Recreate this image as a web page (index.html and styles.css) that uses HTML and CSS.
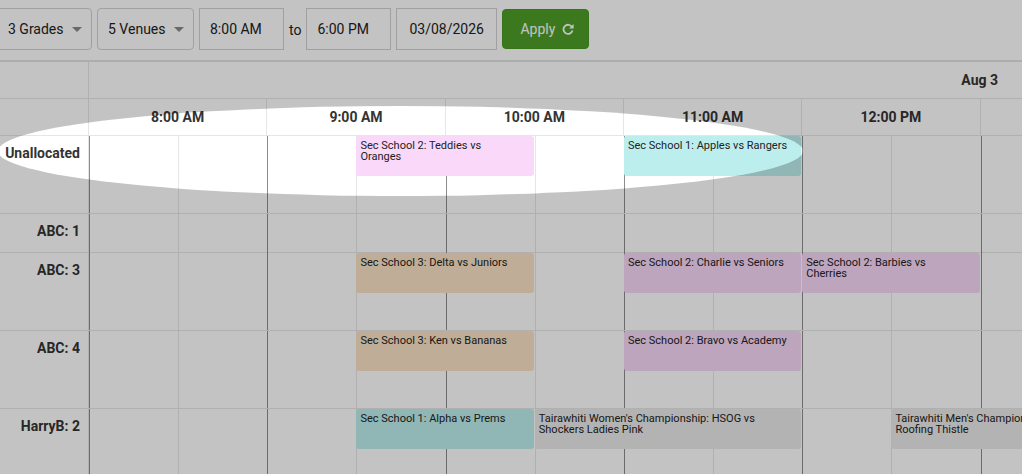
FILE: index.html
```html
<!DOCTYPE html>
<html lang="en">
<head>
<meta charset="utf-8">
<title>Fixture Scheduler</title>
<link rel="stylesheet" href="styles.css">
</head>
<body>
  <div class="toolbar">
    <button class="dropdown">3 Grades <span class="caret"></span></button>
    <button class="dropdown">5 Venues <span class="caret"></span></button>
    <input class="field field-time" value="8:00 AM" readonly>
    <span class="to">to</span>
    <input class="field field-time" value="6:00 PM" readonly>
    <input class="field field-date" value="03/08/2026" readonly>
    <button class="apply">Apply
      <svg class="refresh" width="12" height="12" viewBox="0 0 12 12" aria-hidden="true">
        <path d="M10.1 4.1 A4.6 4.6 0 1 0 10.5 7.6" fill="none" stroke="#fff" stroke-width="1.8"/>
        <path d="M11.6 1 V5.5 H7.1 Z" fill="#fff"/>
      </svg>
    </button>
  </div>

  <div class="calendar">
    <div class="head-row">
      <div class="corner"></div>
      <div class="day">Aug 3</div>
    </div>
    <div class="head-row">
      <div class="corner"></div>
      <div class="times">
        <div class="time">8:00 AM</div>
        <div class="time">9:00 AM</div>
        <div class="time">10:00 AM</div>
        <div class="time">11:00 AM</div>
        <div class="time">12:00 PM</div>
        <div class="time"></div>
      </div>
    </div>

    <div class="res-row">
      <div class="res-label">Unallocated</div>
      <div class="lane">
        <div class="slots">
          <i class="slot hour"></i><i class="slot"></i><i class="slot hour"></i><i class="slot"></i>
          <i class="slot hour"></i><i class="slot"></i><i class="slot hour"></i><i class="slot"></i>
          <i class="slot hour"></i><i class="slot"></i><i class="slot hour"></i><i class="slot"></i>
        </div>
        <div class="events">
          <div class="event school2" style="grid-column: 4 / span 2">Sec School 2: Teddies vs Oranges</div>
          <div class="event school1" style="grid-column: 7 / span 2">Sec School 1: Apples vs Rangers</div>
        </div>
      </div>
    </div>

    <div class="res-row short">
      <div class="res-label">ABC: 1</div>
      <div class="lane">
        <div class="slots">
          <i class="slot hour"></i><i class="slot"></i><i class="slot hour"></i><i class="slot"></i>
          <i class="slot hour"></i><i class="slot"></i><i class="slot hour"></i><i class="slot"></i>
          <i class="slot hour"></i><i class="slot"></i><i class="slot hour"></i><i class="slot"></i>
        </div>
        <div class="events"></div>
      </div>
    </div>

    <div class="res-row">
      <div class="res-label">ABC: 3</div>
      <div class="lane">
        <div class="slots">
          <i class="slot hour"></i><i class="slot"></i><i class="slot hour"></i><i class="slot"></i>
          <i class="slot hour"></i><i class="slot"></i><i class="slot hour"></i><i class="slot"></i>
          <i class="slot hour"></i><i class="slot"></i><i class="slot hour"></i><i class="slot"></i>
        </div>
        <div class="events">
          <div class="event school3" style="grid-column: 4 / span 2">Sec School 3: Delta vs Juniors</div>
          <div class="event school2" style="grid-column: 7 / span 2">Sec School 2: Charlie vs Seniors</div>
          <div class="event school2" style="grid-column: 9 / span 2">Sec School 2: Barbies vs Cherries</div>
        </div>
      </div>
    </div>

    <div class="res-row">
      <div class="res-label">ABC: 4</div>
      <div class="lane">
        <div class="slots">
          <i class="slot hour"></i><i class="slot"></i><i class="slot hour"></i><i class="slot"></i>
          <i class="slot hour"></i><i class="slot"></i><i class="slot hour"></i><i class="slot"></i>
          <i class="slot hour"></i><i class="slot"></i><i class="slot hour"></i><i class="slot"></i>
        </div>
        <div class="events">
          <div class="event school3" style="grid-column: 4 / span 2">Sec School 3: Ken vs Bananas</div>
          <div class="event school2" style="grid-column: 7 / span 2">Sec School 2: Bravo vs Academy</div>
        </div>
      </div>
    </div>

    <div class="res-row">
      <div class="res-label">HarryB: 2</div>
      <div class="lane">
        <div class="slots">
          <i class="slot hour"></i><i class="slot"></i><i class="slot hour"></i><i class="slot"></i>
          <i class="slot hour"></i><i class="slot"></i><i class="slot hour"></i><i class="slot"></i>
          <i class="slot hour"></i><i class="slot"></i><i class="slot hour"></i><i class="slot"></i>
        </div>
        <div class="events">
          <div class="event school1" style="grid-column: 4 / span 2">Sec School 1: Alpha vs Prems</div>
          <div class="event champ" style="grid-column: 6 / span 3">Tairawhiti Women's Championship: HSOG vs Shockers Ladies Pink</div>
          <div class="event champ" style="grid-column: 10 / span 3">Tairawhiti Men's Championship: YMP Seniors vs Roofing Thistle</div>
        </div>
      </div>
    </div>
  </div>

  <div class="spotlight"></div>
</body>
</html>
```

FILE: styles.css
```css
html, body {
  margin: 0;
  padding: 0;
  background: #fff;
  overflow: hidden;
}

body {
  font-family: "Roboto", "Noto Sans", sans-serif;
  color: #333;
  width: 1022px;
  height: 474px;
}

/* ---------- filter toolbar ---------- */
.toolbar {
  display: flex;
  align-items: flex-start;
  gap: 5px;
  height: 62px;
  box-sizing: border-box;
  padding-top: 8px;
  margin-left: -3px;
  border-bottom: 2px solid #e2e2e2;
}

.dropdown {
  display: flex;
  align-items: center;
  gap: 8px;
  height: 42px;
  margin: 0;
  padding: 0 9.5px 0 10px;
  border: 1px solid #d2d2d2;
  border-radius: 4px;
  background: #fff;
  font-family: inherit;
  font-size: 14px;
  color: #222;
}

.caret {
  width: 0;
  height: 0;
  border-left: 5px solid transparent;
  border-right: 5px solid transparent;
  border-top: 5px solid #8a8a8a;
}

.field {
  height: 42px;
  box-sizing: border-box;
  margin: 0;
  padding: 0 10px;
  border: 1px solid #d2d2d2;
  border-radius: 0;
  background: #fff;
  font-family: inherit;
  font-size: 14px;
  font-weight: 400;
  color: #222;
  outline: none;
}

.field-time { width: 85px; }
.field-date { width: 101px; padding-left: 12px; }

.to {
  line-height: 44px;
  font-size: 14px;
  color: #222;
}

.apply {
  display: flex;
  align-items: center;
  gap: 7px;
  height: 40px;
  margin: 1px 0 0;
  padding: 0 14px 0 17px;
  border: 1px solid #4a9825;
  border-radius: 4px;
  background: #4f9f28;
  color: #fff;
  font-family: inherit;
  font-size: 14px;
}

.refresh { display: block; }

/* ---------- timeline ---------- */
.calendar {
  width: 1022px;
  overflow: hidden;
}

.head-row {
  display: flex;
  height: 37px;
  box-sizing: border-box;
  border-bottom: 1px solid #e6e6e6;
}

.corner {
  flex: 0 0 89px;
  box-sizing: border-box;
  border-right: 1px solid #e6e6e6;
}

.day {
  flex: 1;
  display: flex;
  align-items: center;
  justify-content: flex-end;
  padding-right: 24px;
  font-size: 14px;
  font-weight: 700;
}

.times {
  display: flex;
  flex-shrink: 0;
}

.time {
  flex: 0 0 178.3333px;
  box-sizing: border-box;
  border-right: 1px solid #e6e6e6;
  display: flex;
  align-items: center;
  justify-content: center;
  font-size: 14px;
  font-weight: 700;
}

.res-row {
  display: flex;
  height: 78px;
  box-sizing: border-box;
  border-bottom: 1px solid #e6e6e6;
}

.res-row.short { height: 39px; }

.res-label {
  flex: 0 0 89px;
  box-sizing: border-box;
  border-right: 1px solid #e6e6e6;
  padding: 7px 8px 0 0;
  text-align: right;
  font-size: 14px;
  line-height: 20px;
  font-weight: 700;
}

.lane {
  display: grid;
  flex: 0 0 1070px;
}

.slots,
.events {
  grid-area: 1 / 1;
}

.slots { display: flex; }

.slot {
  flex: 0 0 89.1667px;
  box-sizing: border-box;
  border-left: 1px solid #e6e6e6;
}

.slot.hour { border-left-color: #8c8c8c; }

.events {
  display: grid;
  grid-template-columns: repeat(12, 89.1667px);
  grid-template-rows: 40px;
  align-content: start;
}

.event {
  grid-row: 1;
  height: 40px;
  box-sizing: border-box;
  margin-right: 1px;
  padding: 4px 14px 0 4px;
  border-radius: 3px;
  font-size: 11px;
  line-height: 11px;
  color: #222;
  overflow: hidden;
}

.school1 { background: #bdeeee; }
.school2 { background: #f9d8f9; }
.school3 { background: #fae3c7; }
.champ { background: #ebebeb; }

/* dimmed page with an elliptical highlight around the unallocated lane */
.spotlight {
  position: fixed;
  left: -2px;
  top: 106px;
  width: 805px;
  height: 90px;
  border-radius: 50%;
  box-shadow: 0 0 0 2000px rgba(0, 0, 0, 0.235);
  pointer-events: none;
}
```
